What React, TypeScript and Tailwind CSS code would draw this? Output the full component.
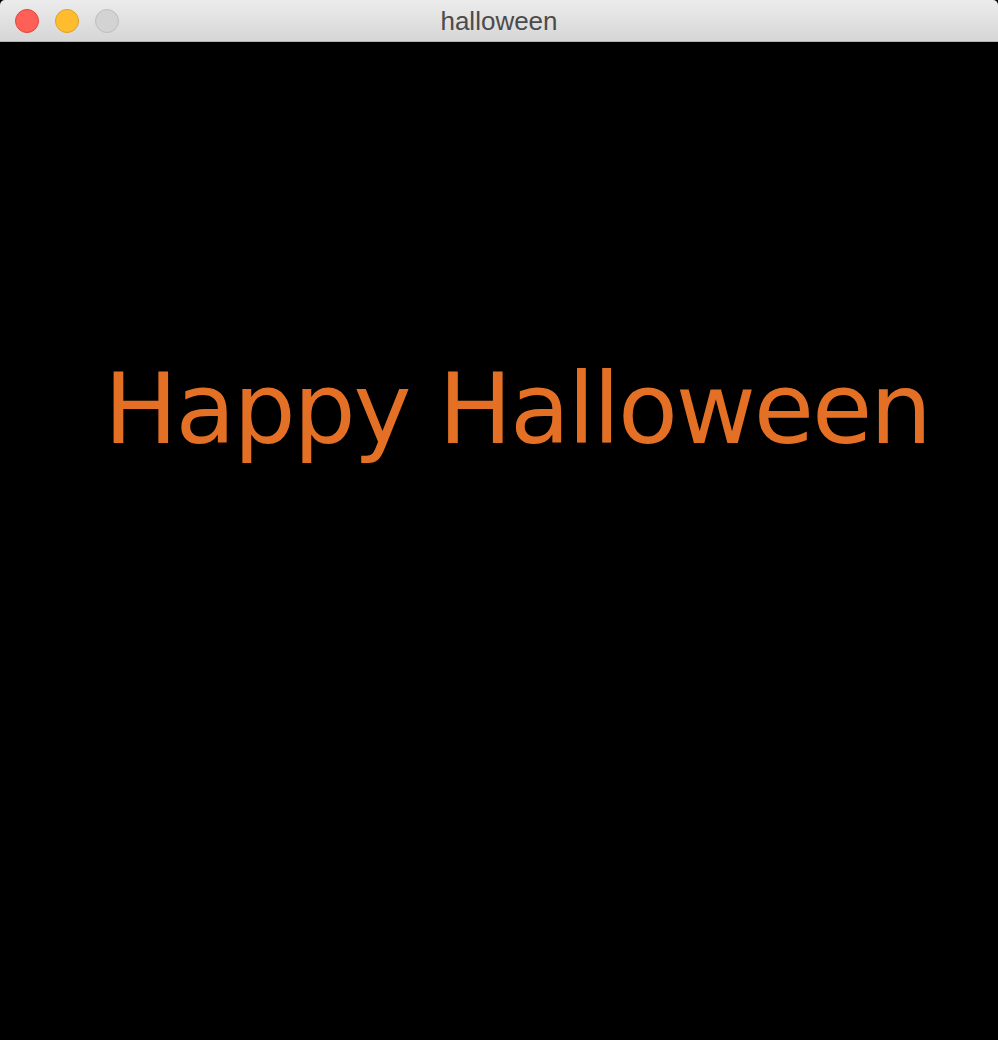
export default function App() {
  return (
    <div className="w-[998px] h-[1040px] bg-black flex flex-col overflow-hidden">
      {/* 타이틀 바 */}
      <div className="relative h-[42px] shrink-0 rounded-t-[5px] border-b border-[#b4b4b4] bg-gradient-to-b from-[#ececec] to-[#d6d6d6] flex items-center">
        <div className="flex items-center gap-4 pl-[15px]">
          <span className="block w-6 h-6 rounded-full bg-[#fe5f57] border border-[#e0443e]" />
          <span className="block w-6 h-6 rounded-full bg-[#febc2e] border border-[#dea123]" />
          <span className="block w-6 h-6 rounded-full bg-[#d3d3d3] border border-[#bebebe]" />
        </div>
        <p className="absolute inset-x-0 top-[6px] text-center text-[26px] leading-[30px] text-[#4b4b4b] font-['Liberation_Sans',sans-serif]">
          halloween
        </p>
      </div>

      {/* 본문 */}
      <div className="flex-1 pt-[318px] pl-[104px]">
        <h1 className="text-[98px] leading-none tracking-[-2.15px] text-[#e37025] font-['DejaVu_Sans',sans-serif] whitespace-nowrap">
          Happy Halloween
        </h1>
      </div>
    </div>
  );
}
